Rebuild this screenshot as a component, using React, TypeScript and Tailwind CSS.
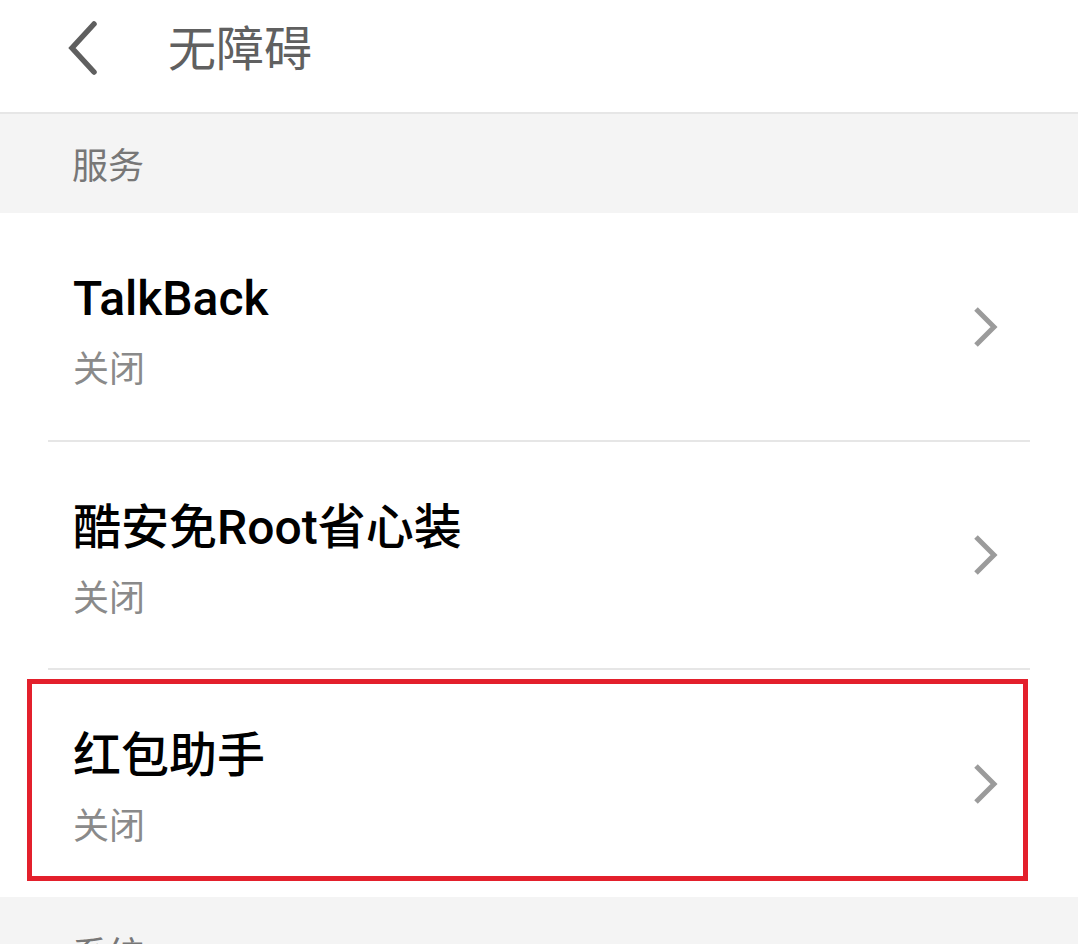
const font = { fontFamily: '"Roboto", "Noto Sans CJK SC", sans-serif' };

function BackIcon() {
  return (
    <svg width="40" height="56" viewBox="0 0 40 56" className="shrink-0">
      <path d="M32 4 L10 28 L32 52" fill="none" stroke="#5f5f5f" strokeWidth="5.5" strokeLinecap="round" strokeLinejoin="miter" />
    </svg>
  );
}

function ChevronRight() {
  return (
    <svg width="28" height="44" viewBox="0 0 28 44" className="shrink-0">
      <path d="M4 4 L22 22 L4 40" fill="none" stroke="#9b9b9b" strokeWidth="5" strokeLinecap="butt" />
    </svg>
  );
}

type Row = { title: string; status: string; h: string; last?: boolean; marked?: boolean };

const rows: Row[] = [
  { title: 'TalkBack', status: '关闭', h: 'h-[229px]' },
  { title: '酷安免Root省心装', status: '关闭', h: 'h-[228px]' },
  { title: '红包助手', status: '关闭', h: 'h-[227px]', last: true, marked: true },
];

function SettingRow({ row }: { row: Row }) {
  return (
    <div className={`relative bg-white ${row.h}`}>
      <div
        className={`mx-[48px] h-full flex items-center pl-[25px] pr-[30px] ${
          row.last ? '' : 'border-b-2 border-[#e6e6e6]'
        }`}
      >
        <div className="flex-1 self-start pt-[58px]">
          <div className="text-[48px] leading-[56px] font-medium text-black">{row.title}</div>
          <div className="mt-[19px] text-[36px] leading-[48px] text-[#8a8a8a]">{row.status}</div>
        </div>
        <ChevronRight />
      </div>
      {row.marked && (
        <div className="absolute left-[27px] top-[9px] w-[1001px] h-[202px] border-[5px] border-[#e3202c] pointer-events-none" />
      )}
    </div>
  );
}

export default function App() {
  return (
    <div className="w-[1078px] h-[944px] overflow-hidden bg-white" style={font}>
      <header className="h-[114px] flex items-center border-b-2 border-[#e6e6e6] bg-white">
        <div className="pl-[62px] w-[168px] -mt-[16px]">
          <BackIcon />
        </div>
        <h1 className="text-[48px] leading-[56px] text-[#606060] font-normal -mt-[12px]">无障碍</h1>
      </header>

      <div className="h-[99px] bg-[#f4f4f4] flex items-center pl-[72px]">
        <span className="text-[36px] leading-[48px] text-[#777777] mt-[6px]">服务</span>
      </div>

      {rows.map((r) => (
        <SettingRow key={r.title} row={r} />
      ))}

      <div className="h-[120px] bg-[#f4f4f4] pl-[72px] pt-[35px]">
        <span className="text-[36px] leading-[48px] text-[#777777]">系统</span>
      </div>
    </div>
  );
}
